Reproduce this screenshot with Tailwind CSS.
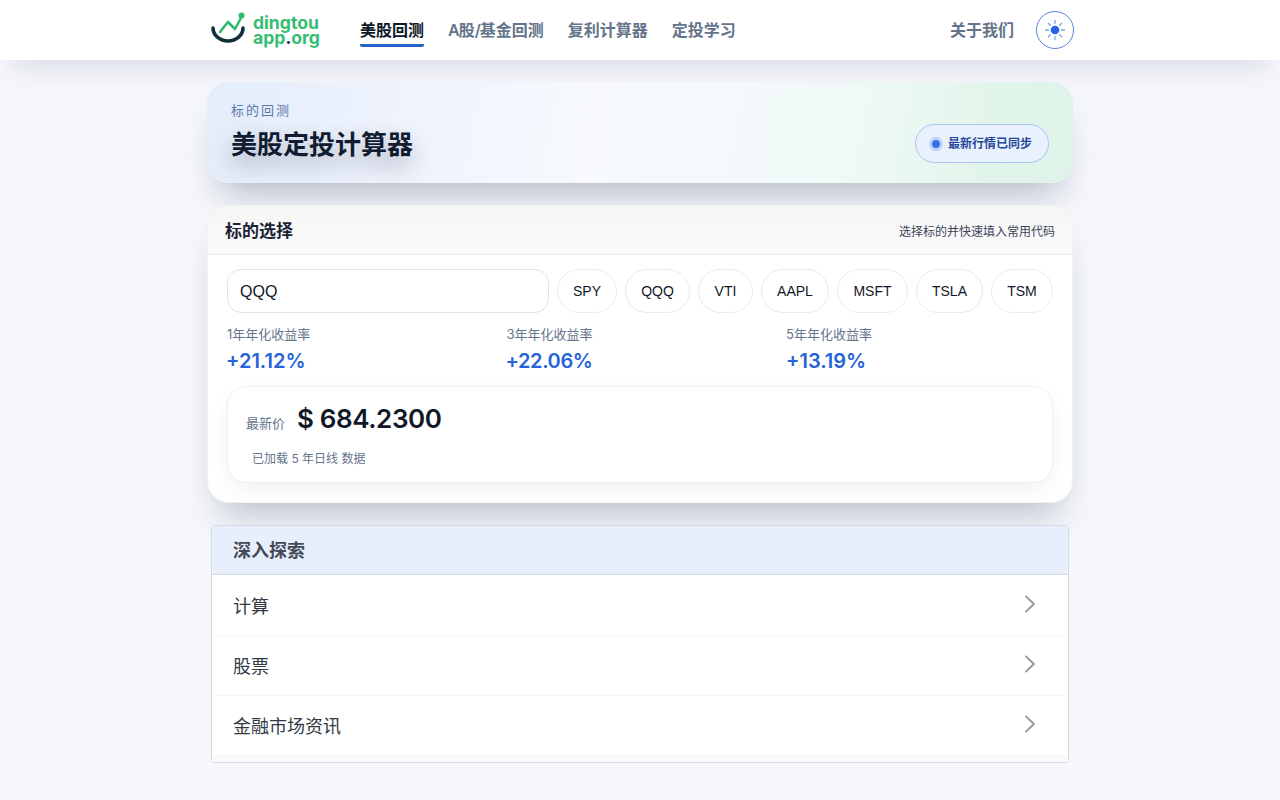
<!DOCTYPE html>
<html lang="zh-CN">
<head>
<meta charset="utf-8">
<title>美股定投计算器</title>
<script src="https://cdn.jsdelivr.net/npm/@tailwindcss/browser@4"></script>
</head>
<body class="bg-[#f5f7fc] font-['Inter','Noto_Sans_CJK_SC',sans-serif] h-[800px] overflow-hidden">
<header class="h-[60px] bg-white shadow-[0_16px_30px_-12px_rgba(15,23,42,0.14)] relative">
  <div class="w-[866px] mx-auto h-full flex items-center">
    <div class="flex items-center w-[153px] pl-[3px] shrink-0">
      <svg width="38" height="34" viewBox="0 0 38 34" fill="none" class="shrink-0 overflow-visible">
        <path d="M3 15a15 13 0 0 0 30 0" stroke="#12303a" stroke-width="3.600" stroke-linecap="round"/>
        <path d="M10 19l8-10 7 7 6-11" stroke="#2fbb6c" stroke-width="2.600" stroke-linecap="round" stroke-linejoin="round"/>
        <circle cx="31.500" cy="2.500" r="3" fill="#2fbb6c"/>
      </svg>
      <div class="ml-[5px] -mt-[1px] font-bold text-[17.600px] leading-[15px] text-[#36bd72] font-['Inter',sans-serif]">dingtou<br>app<span class="text-[#12303a]">.</span>org</div>
    </div>
    <nav class="flex gap-6 -mt-[1px] text-[16px] font-semibold text-[#64748b]">
      <a class="text-[#0f172a] h-[30px] leading-[32px] mt-[1px] border-b-[3px] border-[#2563c9] rounded-b-[2px] box-content -mb-[1px]">美股回测</a>
      <a class="h-[32px] leading-[32px] mt-[1px]"><span class="tracking-[-1px]">A</span>股<span class="tracking-[-1px]">/</span>基金回测</a>
      <a class="h-[32px] leading-[32px] mt-[1px]">复利计算器</a>
      <a class="h-[32px] leading-[32px] mt-[1px]">定投学习</a>
    </nav>
    <a class="ml-auto text-[16px] font-semibold text-[#64748b]">关于我们</a>
    <button class="ml-[22px] -mr-[1px] w-[38px] h-[38px] rounded-full border border-[#5b84d8] flex items-center justify-center bg-white">
      <svg width="22" height="22" viewBox="0 0 22 22" fill="none">
        <circle cx="11" cy="11" r="4.300" fill="#2563eb"/>
        <path d="M11 1.500v3M11 17.500v3M1.500 11h3M17.500 11h3M4.300 4.300l2 2M15.700 15.700l2 2M4.300 17.700l2-2M15.700 6.300l2-2" stroke="#7aa2ee" stroke-width="1.300" stroke-linecap="round"/>
      </svg>
    </button>
  </div>
</header>

<main class="w-[866px] mx-auto pt-[22px]">
  <section class="h-[101px] rounded-[22px] bg-[linear-gradient(100deg,#e4edfb_0%,#eef3fd_22%,#f7f9fd_45%,#f4f9fb_60%,#eef9f5_76%,#e1f4ea_90%,#dff3e8_100%)] shadow-[0_24px_36px_-14px_rgba(15,23,42,0.28)] flex items-end justify-between pl-[24px] pr-[24px] relative">
    <div class="pb-[20px]">
      <div class="text-[13px] leading-[18px] tracking-[2px] text-[#5b76a8] mb-[8px] -mt-[2px]">标的回测</div>
      <h1 class="text-[26px] leading-[36px] font-bold text-[#111c30] [text-shadow:0_10px_24px_rgba(15,23,42,0.30)]">美股定投计算器</h1>
    </div>
    <div class="mb-[20px] h-[39px] w-[134px] rounded-full border border-[#a9c6f0] bg-[#e9f2fc] flex items-center pl-[13px] gap-[5px] text-[12px] font-bold text-[#27479b]">
      <span class="w-[14px] h-[14px] rounded-full bg-[#bcd4f9] flex items-center justify-center"><span class="w-[8px] h-[8px] rounded-full bg-[#3b6fe6]"></span></span>
      <span>最新行情已同步</span>
    </div>
  </section>

  <section class="mt-[22px] h-[298px] rounded-[22px] bg-white border border-[#f1f2f6] shadow-[0_24px_36px_-14px_rgba(15,23,42,0.26)] overflow-hidden relative">
    <div class="h-[49px] bg-[linear-gradient(180deg,#f5f5f6,#fbfbfc)] border-b border-[#eceef3] flex items-center justify-between pl-[17px] pr-[17px]">
      <h2 class="text-[17px] font-semibold text-[#1a2233] mt-[3px]">标的选择</h2>
      <span class="text-[12px] text-[#3d4657] mt-[3px]">选择标的并快速填入常用代码</span>
    </div>
    <div class="px-[19px] pt-[14px]">
      <div class="flex items-center gap-2 font-['Liberation_Sans','Noto_Sans_CJK_SC',sans-serif]">
        <div class="w-[322px] h-[44px] rounded-[14px] border border-[#e0e4ee] flex items-center pl-[12px] pt-[1px] text-[16px] text-[#111827]">QQQ</div>
        <a class="h-[44px] w-[60px] rounded-full border border-[#e8ebf2] flex items-center justify-center text-[14px] text-[#111827]">SPY</a>
        <a class="h-[44px] w-[65px] rounded-full border border-[#e8ebf2] flex items-center justify-center text-[14px] text-[#111827]">QQQ</a>
        <a class="h-[44px] w-[55px] rounded-full border border-[#e8ebf2] flex items-center justify-center text-[14px] text-[#111827]">VTI</a>
        <a class="h-[44px] w-[68px] rounded-full border border-[#e8ebf2] flex items-center justify-center text-[14px] text-[#111827]">AAPL</a>
        <a class="h-[44px] w-[71px] rounded-full border border-[#e8ebf2] flex items-center justify-center text-[14px] text-[#111827]">MSFT</a>
        <a class="h-[44px] w-[67px] rounded-full border border-[#e8ebf2] flex items-center justify-center text-[14px] text-[#111827]">TSLA</a>
        <a class="h-[44px] w-[62px] rounded-full border border-[#e8ebf2] flex items-center justify-center text-[14px] text-[#111827]">TSM</a>
      </div>
      <div class="grid grid-cols-[279.500px_279.500px_1fr] mt-[12px]">
        <div>
          <div class="text-[13px] leading-[18px] text-[#64748b]">1年年化收益率</div>
          <div class="mt-[4px] text-[20px] leading-[28px] font-semibold text-[#2563d9] -ml-[1px]">+21.12%</div>
        </div>
        <div>
          <div class="text-[13px] leading-[18px] text-[#64748b]">3年年化收益率</div>
          <div class="mt-[4px] text-[20px] leading-[28px] font-semibold text-[#2563d9] -tracking-[0.4px] -ml-[1px]">+22.06%</div>
        </div>
        <div>
          <div class="text-[13px] leading-[18px] text-[#64748b]">5年年化收益率</div>
          <div class="mt-[4px] text-[20px] leading-[28px] font-semibold text-[#2563d9]">+13.19%</div>
        </div>
      </div>
      <div class="mt-[11px] h-[97px] rounded-[20px] border border-[#eceef3] bg-white shadow-[0_8px_20px_rgba(15,23,42,0.05)] pl-[18px]">
        <div class="flex items-end pt-[13px] h-[50px]">
          <span class="text-[13px] leading-[18px] text-[#64748b] mb-[5px]">最新价</span>
          <span class="ml-[12px] text-[26px] leading-[36px] font-semibold text-[#111827] -tracking-[0.4px]">$ 684.2300</span>
        </div>
        <div class="ml-[6px] mt-[13px] text-[12px] leading-[18px] text-[#64748b]">已加载 5 年日线 数据</div>
      </div>
    </div>
  </section>

  <section class="mt-[22px] mx-[4px] h-[238px] rounded-[4px] border border-[#d6d9e0] bg-white overflow-hidden relative">
    <h2 class="h-[49px] bg-[#e8effc] border-b border-[#d9dfea] flex items-center pl-[21px] pt-[1px] text-[18px] font-semibold text-[#444a55]">深入探索</h2>
    <a class="h-[61px] flex items-center justify-between pl-[21px] pr-[31px] text-[18px] text-[#333a45] border-b border-[#f7f7f8]">
      <span class="mt-[3px]">计算</span>
      <svg width="14" height="20" viewBox="0 0 14 20" fill="none" class="-mt-[3px]"><path d="M3 2.500l8 7.500-8 7.500" stroke="#9a9ca1" stroke-width="2" stroke-linecap="round" stroke-linejoin="round"/></svg>
    </a>
    <a class="h-[60px] flex items-center justify-between pl-[21px] pr-[31px] text-[18px] text-[#333a45] border-b border-[#f7f7f8]">
      <span class="mt-[2px]">股票</span>
      <svg width="14" height="20" viewBox="0 0 14 20" fill="none" class="-mt-[3px]"><path d="M3 2.500l8 7.500-8 7.500" stroke="#9a9ca1" stroke-width="2" stroke-linecap="round" stroke-linejoin="round"/></svg>
    </a>
    <a class="h-[60px] flex items-center justify-between pl-[21px] pr-[31px] text-[18px] text-[#333a45] border-b border-[#f7f7f8]">
      <span class="mt-[2px]">金融市场资讯</span>
      <svg width="14" height="20" viewBox="0 0 14 20" fill="none" class="-mt-[3px]"><path d="M3 2.500l8 7.500-8 7.500" stroke="#9a9ca1" stroke-width="2" stroke-linecap="round" stroke-linejoin="round"/></svg>
    </a>
    <div class="h-[8px] bg-[#fafafb]"></div>
  </section>
</main>
</body>
</html>
